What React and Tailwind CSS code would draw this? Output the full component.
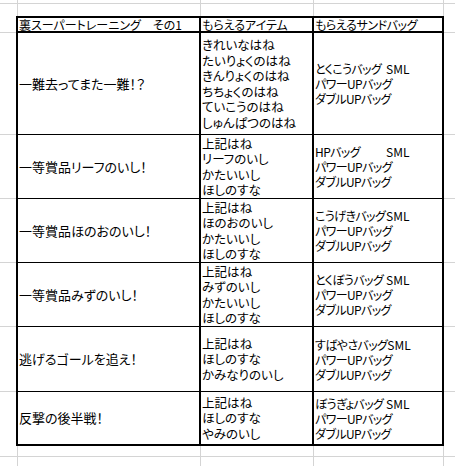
const rows = [
    {
        h: 'h-[102px]',
        title: '一難去ってまた一難！？',
        items: ['きれいなはね', 'たいりょくのはね', 'きんりょくのはね', 'ちちょくのはね', 'ていこうのはね', 'しゅんぱつのはね'],
        bag: 'とくこうバッグ',
    },
    {
        h: 'h-[64px]',
        title: '一等賞品リーフのいし！',
        items: ['上記はね', 'リーフのいし', 'かたいいし', 'ほしのすな'],
        bag: 'HPバッグ',
    },
    {
        h: 'h-[64px]',
        title: '一等賞品ほのおのいし！',
        items: ['上記はね', 'ほのおのいし', 'かたいいし', 'ほしのすな'],
        bag: 'こうげきバッグ',
    },
    {
        h: 'h-[64px]',
        title: '一等賞品みずのいし！',
        items: ['上記はね', 'みずのいし', 'かたいいし', 'ほしのすな'],
        bag: 'とくぼうバッグ',
    },
    {
        h: 'h-[65px]',
        title: '逃げるゴールを追え！',
        items: ['上記はね', 'ほしのすな', 'かみなりのいし'],
        bag: 'すばやさバッグ',
    },
    {
        h: 'h-[52px]',
        title: '反撃の後半戦！',
        items: ['上記はね', 'ほしのすな', 'やみのいし'],
        bag: 'ぼうぎょバッグ',
    },
];

// gray gridlines outside the table, same columns as the sheet
const GridStrip = ({ h, line }) => (
    <div className={`flex ${h} ${line ? 'border-b border-[#d4d4d4]' : ''}`}>
        <div className="w-[18px] border-r border-[#d4d4d4]"></div>
        <div className="w-[183px] border-r border-[#d4d4d4]"></div>
        <div className="w-[113px] border-r border-[#d4d4d4]"></div>
        <div className="w-[130px] border-r border-[#d4d4d4]"></div>
        <div className="flex-1"></div>
    </div>
);

const Margin = ({ className }) => (
    <div className={`flex flex-col ${className}`}>
        <div className="h-[17px] border-b border-[#d4d4d4]"></div>
        <div className="h-[102px] border-b border-[#d4d4d4]"></div>
        <div className="h-[64px] border-b border-[#d4d4d4]"></div>
        <div className="h-[64px] border-b border-[#d4d4d4]"></div>
        <div className="h-[64px] border-b border-[#d4d4d4]"></div>
        <div className="h-[65px] border-b border-[#d4d4d4]"></div>
        <div className="h-[54px]"></div>
    </div>
);

const App = () => {
    return (
        <div className="w-[455px] h-[466px] overflow-hidden bg-white text-black text-[13px] font-['Noto_Sans_CJK_JP','Liberation_Sans',sans-serif] [font-feature-settings:'palt']">
            <GridStrip h="h-[4px]" line={true} />
            <GridStrip h="h-[12px]" line={false} />

            <div className="flex">
                <Margin className="w-[16px]" />

                <div className="w-[428px] border-2 border-black flex flex-col">
                    <div className="flex h-[15px] border-b-2 border-black text-[12px] leading-[13px] whitespace-nowrap">
                        <div className="w-[181px] pl-[1px] flex items-center">裏スーパートレーニング　その1</div>
                        <div className="w-[113px] border-l-2 border-black pl-[1px] flex items-center">もらえるアイテム</div>
                        <div className="flex-1 border-l-2 border-black pl-[1px] flex items-center tracking-[-0.4px]">もらえるサンドバッグ</div>
                    </div>

                    {rows.map((row, i) => (
                        <div key={i} className={`flex ${row.h} ${i < rows.length - 1 ? 'border-b border-black' : ''}`}>
                            <div className="w-[181px] pl-[1px] flex items-center whitespace-nowrap">{row.title}</div>
                            <div className="w-[113px] border-l-2 border-black pl-[1px] flex flex-col justify-center text-[12.5px] leading-[15.5px] whitespace-nowrap">
                                {row.items.map((item, j) => (
                                    <span key={j}>{item}</span>
                                ))}
                            </div>
                            <div className="flex-1 border-l-2 border-black pl-[1px] flex flex-col justify-center text-[12px] tracking-[-0.6px] leading-[15px] whitespace-nowrap">
                                <div className="flex">
                                    <span className="min-w-[71px] shrink-0">{row.bag}</span>
                                    <span className="tracking-normal">SML</span>
                                </div>
                                <span>パワーUPバッグ</span>
                                <span>ダブルUPバッグ</span>
                            </div>
                        </div>
                    ))}
                </div>

                <Margin className="flex-1" />
            </div>

            <GridStrip h="h-[11px]" line={true} />
            <GridStrip h="h-[10px]" line={false} />
        </div>
    );
};

export default App;
